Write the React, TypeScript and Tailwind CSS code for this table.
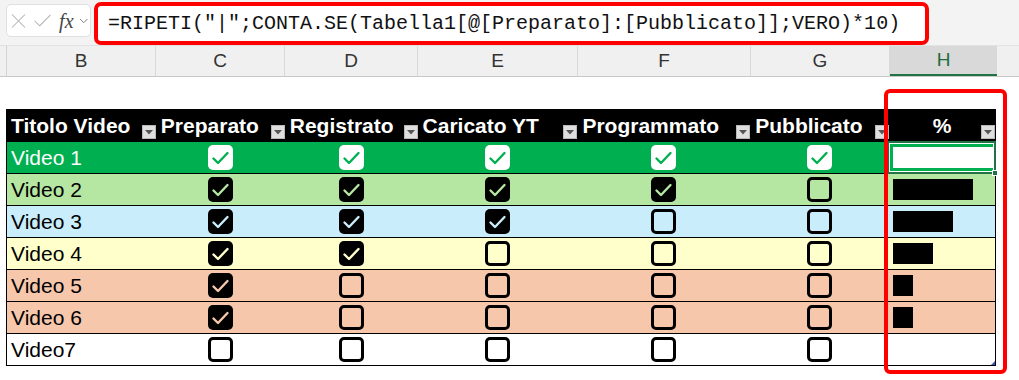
import { Check, ChevronDown, X } from 'lucide-react'

interface VideoRow {
  title: string
  steps: boolean[]
  rowClass: string
  tick: string
  light?: boolean
}

const rows: VideoRow[] = [
  { title: 'Video 1', steps: [true, true, true, true, true], rowClass: 'bg-[#00b050] text-white', tick: '#00b050', light: true },
  { title: 'Video 2', steps: [true, true, true, true, false], rowClass: 'bg-[#b5e6a2] text-black', tick: '#b5e6a2' },
  { title: 'Video 3', steps: [true, true, true, false, false], rowClass: 'bg-[#caedfb] text-black', tick: '#caedfb' },
  { title: 'Video 4', steps: [true, true, false, false, false], rowClass: 'bg-[#ffffcc] text-black', tick: '#ffffcc' },
  { title: 'Video 5', steps: [true, false, false, false, false], rowClass: 'bg-[#f7c7ac] text-black', tick: '#f7c7ac' },
  { title: 'Video 6', steps: [true, false, false, false, false], rowClass: 'bg-[#f7c7ac] text-black', tick: '#f7c7ac' },
  { title: 'Video7', steps: [false, false, false, false, false], rowClass: 'bg-white text-black', tick: '#ffffff' },
]

// widths of the sheet columns C..G
const colWidths = ['w-[129px]', 'w-[133px]', 'w-[160px]', 'w-[173px]', 'w-[139px]']

const letters = [
  { l: 'B', w: 'w-[149px]' },
  { l: 'C', w: 'w-[129px]' },
  { l: 'D', w: 'w-[133px]' },
  { l: 'E', w: 'w-[160px]' },
  { l: 'F', w: 'w-[173px]' },
  { l: 'G', w: 'w-[139px]' },
]

const headers = ['Preparato', 'Registrato', 'Caricato YT', 'Programmato', 'Pubblicato']

function FilterButton() {
  return (
    <div className="absolute right-0 bottom-[3px] w-[14px] h-[14px] bg-[#dfdfdf] border border-[#b8b8b8] flex items-center justify-center">
      <svg width="8" height="5" viewBox="0 0 8 5">
        <polygon points="0,0 8,0 4,4.5" fill="#555" />
      </svg>
    </div>
  )
}

function Box({ on, tick, light }: { on: boolean; tick: string; light?: boolean }) {
  if (!on) {
    return <div className="w-[25px] h-[25px] rounded-[5px] border-[3px] border-black" />
  }
  return (
    <div className={`w-[25px] h-[25px] rounded-[5px] flex items-center justify-center ${light ? 'bg-white' : 'bg-black'}`}>
      <svg width="25" height="25" viewBox="0 0 25 25">
        <polyline points="5.5,13.5 10,18 19.5,8" fill="none" stroke={tick} strokeWidth="2.4" strokeLinecap="round" strokeLinejoin="round" />
      </svg>
    </div>
  )
}

export default function App() {
  return (
    <div className="relative w-[1019px] h-[380px] overflow-hidden bg-white font-['Liberation_Sans',sans-serif]">
      {/* formula bar */}
      <div className="flex items-start h-[46px] bg-[#f3f3f3] border-b border-[#e2e2e2]">
        <div className="mt-[4px] ml-[6px] w-[85px] h-[33px] bg-white border border-[#e0e0e0] rounded-[5px] flex items-center text-[#b3b3b3]">
          <X size={26} strokeWidth={1} className="-ml-[1px]" />
          <Check size={24} strokeWidth={1.1} className="ml-[0px]" />
          <span className="font-['Liberation_Serif',serif] italic text-[20px] text-[#444] ml-[5px] leading-none">fx</span>
          <ChevronDown size={14} strokeWidth={1.5} className="text-[#666] ml-[3px]" />
        </div>
        <div className="mt-[2px] ml-[3px] w-[835px] h-[43px] bg-white border-4 border-[#ff0000] rounded-[7px] flex items-center pl-[10px] font-['Liberation_Mono',monospace] text-[20px] text-[#111]">
          =RIPETI("|";CONTA.SE(Tabella1[@[Preparato]:[Pubblicato]];VERO)*10)
        </div>
      </div>

      {/* column letters */}
      <div className="flex h-[31px] bg-[#f0f0f0] border-b border-[#c8c8c8] text-[19px] text-[#333]">
        <div className="w-[7px] border-r border-[#d4d4d4]" />
        {letters.map((c) => (
          <div key={c.l} className={`${c.w} flex items-center justify-center border-r border-[#d9d9d9]`}>
            {c.l}
          </div>
        ))}
        <div className="w-[107px] flex items-center justify-center bg-[#d9d9d9] text-[#1e6b3c] border-b-2 border-[#217346]">H</div>
        <div className="flex-1" />
      </div>

      {/* table */}
      <div className="mt-[32px] ml-[6px] w-[990px] border-l border-r border-black text-[21px]">
        <div className="flex h-[33px] bg-black text-white font-bold">
          <div className="relative w-[149px] flex items-center pl-[4px]">
            Titolo Video
            <FilterButton />
          </div>
          {headers.map((h, i) => (
            <div key={h} className={`relative ${colWidths[i]} flex items-center pl-[5px]`}>
              {h}
              <FilterButton />
            </div>
          ))}
          <div className="relative w-[106px] flex items-center justify-center">
            %
            <FilterButton />
          </div>
        </div>

        {rows.map((r, idx) => {
          const done = r.steps.filter(Boolean).length
          return (
            <div key={r.title} className={`flex h-[32px] border-b border-black ${r.rowClass}`}>
              <div className="w-[149px] flex items-center pl-[4px]">{r.title}</div>
              {r.steps.map((s, i) => (
                <div key={i} className={`${colWidths[i]} flex items-center justify-center`}>
                  <Box on={s} tick={r.tick} light={r.light} />
                </div>
              ))}
              <div className="relative w-[106px] flex items-center pl-[4px]">
                {done > 0 && (
                  <div className={`h-[21px] ${r.light ? 'bg-white' : 'bg-black'}`} style={{ width: done * 20 }} />
                )}
                {idx === 0 && (
                  <div className="absolute -left-[2px] -top-[1px] -right-[1px] -bottom-[1px] border-2 border-[#217346] outline outline-1 -outline-offset-3 outline-white">
                    <div className="absolute -right-[4px] -bottom-[4px] w-[6px] h-[6px] bg-[#217346] border border-white" />
                  </div>
                )}
                {idx === rows.length - 1 && (
                  <div className="absolute right-0 bottom-0 w-0 h-0 border-l-[4px] border-l-transparent border-b-[4px] border-b-[#3b5ab8]" />
                )}
              </div>
            </div>
          )
        })}
      </div>

      {/* highlight around the % column */}
      <div className="absolute left-[884px] top-[89px] w-[123px] h-[285px] border-4 border-[#ff0000] rounded-[6px]" />
    </div>
  )
}
